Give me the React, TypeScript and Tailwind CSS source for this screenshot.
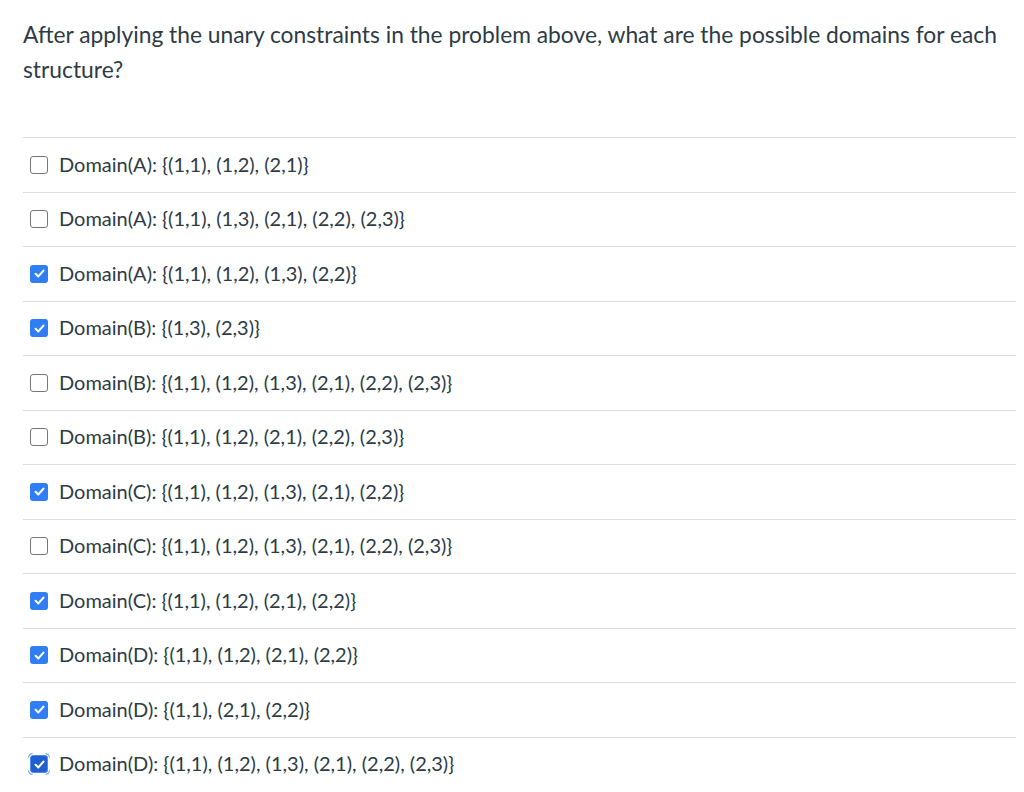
import React from "react";

const options: { text: string; checked: boolean; focus?: boolean }[] = [
  { text: "Domain(A): {(1,1), (1,2), (2,1)}", checked: false },
  { text: "Domain(A): {(1,1), (1,3), (2,1), (2,2), (2,3)}", checked: false },
  { text: "Domain(A): {(1,1), (1,2), (1,3), (2,2)}", checked: true },
  { text: "Domain(B): {(1,3), (2,3)}", checked: true },
  { text: "Domain(B): {(1,1), (1,2), (1,3), (2,1), (2,2), (2,3)}", checked: false },
  { text: "Domain(B): {(1,1), (1,2), (2,1), (2,2), (2,3)}", checked: false },
  { text: "Domain(C): {(1,1), (1,2), (1,3), (2,1), (2,2)}", checked: true },
  { text: "Domain(C): {(1,1), (1,2), (1,3), (2,1), (2,2), (2,3)}", checked: false },
  { text: "Domain(C): {(1,1), (1,2), (2,1), (2,2)}", checked: true },
  { text: "Domain(D): {(1,1), (1,2), (2,1), (2,2)}", checked: true },
  { text: "Domain(D): {(1,1), (2,1), (2,2)}", checked: true },
  { text: "Domain(D): {(1,1), (1,2), (1,3), (2,1), (2,2), (2,3)}", checked: true, focus: true },
];

function Box({ checked, focus }: { checked: boolean; focus?: boolean }) {
  if (!checked) {
    return (
      <span className="block w-[18px] h-[18px] rounded-[3px] border border-[#767676] bg-white shrink-0" />
    );
  }
  return (
    <span className="relative block w-[18px] h-[18px] shrink-0">
      {focus && (
        <svg className="absolute -left-[2px] -top-[2px]" width="22" height="22" viewBox="0 0 22 22" fill="none">
          <path d="M0.5 4.5 A4 4 0 0 1 4.5 0.5" stroke="#5a95f2" strokeWidth="1" />
          <path d="M17.5 0.5 A4 4 0 0 1 21.5 4.5" stroke="#5a95f2" strokeWidth="1" />
          <path d="M21.5 17.5 A4 4 0 0 1 17.5 21.5" stroke="#5a95f2" strokeWidth="1" />
          <path d="M4.5 21.5 A4 4 0 0 1 0.5 17.5" stroke="#5a95f2" strokeWidth="1" />
        </svg>
      )}
      <span
        className={
          "relative flex items-center justify-center w-[18px] h-[18px] rounded-[3px] " +
          (focus ? "bg-[#1f5fcf] border border-[#4d8df2]" : "bg-[#2f7ef6]")
        }
      >
        <svg width="13" height="13" viewBox="0 0 16 16" fill="none">
          <path
            d="M3.2 8.4 L6.6 11.6 L12.9 4.4"
            stroke="white"
            strokeWidth="2.6"
            strokeLinecap="round"
            strokeLinejoin="round"
          />
        </svg>
      </span>
    </span>
  );
}

export default function App() {
  return (
    <div
      className="bg-white min-h-[792px] pl-[23px] pr-[8px] pt-[17px] text-[#2d3b45]"
      style={{ fontFamily: "Lato, 'Open Sans', sans-serif" }}
    >
      <p className="text-[22.8px] leading-[35px] pr-[6px]">
        After applying the unary constraints in the problem above, what are the possible domains for each
        structure?
      </p>
      <div className="mt-[50px]">
        {options.map((o, i) => (
          <div
            key={i}
            className="flex items-center h-[54.5px] border-t border-[#dcdfe2] pl-[7px] gap-[11px]"
          >
            <Box checked={o.checked} focus={o.focus} />
            <span className="text-[20px] leading-[24px] -mt-[2px]">{o.text}</span>
          </div>
        ))}
      </div>
    </div>
  );
}
